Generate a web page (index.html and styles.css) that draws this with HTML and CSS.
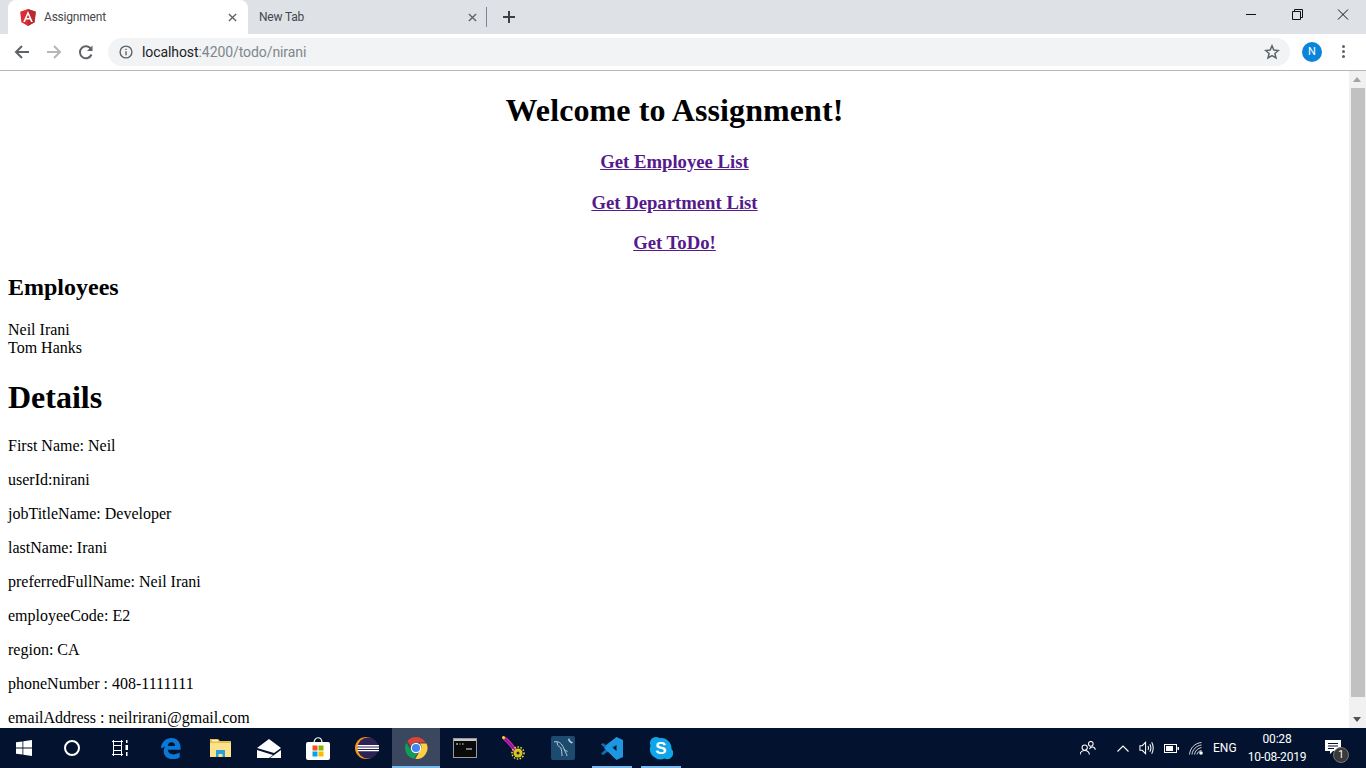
FILE: index.html
```html
<!DOCTYPE html>
<html lang="en">
<head>
<meta charset="utf-8">
<title>Assignment</title>
<link rel="stylesheet" href="styles.css">
</head>
<body>
<div class="tabstrip">
  <div class="tab active">
    <svg class="favicon" viewBox="0 0 16 17"><path fill="#dd2c35" d="M8 0 .2 2.800l1.200 10.400L8 17l6.600-3.800 1.200-10.400z"/><path fill="#b52e31" d="M8 0v17l6.600-3.800 1.200-10.400z"/><path fill="#fff" d="M8 2 3.200 12.900H5l1-2.400h4l1 2.400h1.800zm1.400 7.100H6.600L8 5.700z"/></svg>
    <span class="tab-title">Assignment</span>
    <svg class="tab-x" viewBox="0 0 10 10"><path d="M1 1l8 8M9 1 1 9"/></svg>
  </div>
  <div class="tab inactive">
    <span class="tab-title">New Tab</span>
    <svg class="tab-x" viewBox="0 0 10 10"><path d="M1 1l8 8M9 1 1 9"/></svg>
  </div>
  <span class="tab-sep"></span>
  <svg class="plus" viewBox="0 0 12 12"><path d="M6 0v12M0 6h12"/></svg>
  <div class="win-controls">
    <svg class="win-btn" viewBox="0 0 46 30"><path d="M18 14.500h10"/></svg>
    <svg class="win-btn" viewBox="0 0 46 30"><path d="M18.500 11.500h8v8h-8zM20.500 11.500v-2h8v8h-2"/></svg>
    <svg class="win-btn" viewBox="0 0 46 30"><path d="M18 9.500l10 10M28 9.500l-10 10"/></svg>
  </div>
</div>
<div class="toolbar">
  <svg class="nav" viewBox="0 0 16 16"><path class="nav-dark" d="M15 8H2M8 2 2 8l6 6"/></svg>
  <svg class="nav" viewBox="0 0 16 16"><path class="nav-light" d="M1 8h13M8 2l6 6-6 6"/></svg>
  <svg class="nav" viewBox="0 0 16 16"><path class="nav-dark" d="M13.500 10.500A6 6 0 1 1 13 5"/><path class="nav-fill" d="M14.500 1.500v5.500H9z"/></svg>
  <div class="omnibox">
    <svg class="info" viewBox="0 0 14 14"><circle cx="7" cy="7" r="5.900"/><path d="M7 6.200v4M7 3.800v1.300"/></svg>
    <span class="url"><span class="url-host">localhost</span>:4200/todo/nirani</span>
    <svg class="star" viewBox="0 0 16 16"><path d="M8 1.800l1.800 4.300 4.600.4-3.500 3 1.100 4.500L8 11.600 4 14l1.100-4.500-3.500-3 4.600-.4z"/></svg>
  </div>
  <div class="avatar">N</div>
  <div class="menu"><i></i><i></i><i></i></div>
</div>
<div class="viewport">
  <main class="page">
    <h1 class="center title">Welcome to Assignment!</h1>
    <h3 class="center"><a href="#employees">Get Employee List</a></h3>
    <h3 class="center"><a href="#departments">Get Department List</a></h3>
    <h3 class="center"><a href="#todo">Get ToDo!</a></h3>
    <h2>Employees</h2>
    <div>Neil Irani</div>
    <div>Tom Hanks</div>
    <h1>Details</h1>
    <p>First Name: Neil</p>
    <p>userId:nirani</p>
    <p>jobTitleName: Developer</p>
    <p>lastName: Irani</p>
    <p>preferredFullName: Neil Irani</p>
    <p>employeeCode: E2</p>
    <p>region: CA</p>
    <p>phoneNumber : 408-1111111</p>
    <p>emailAddress : neilrirani@gmail.com</p>
  </main>
  <div class="scrollbar">
    <span class="arrow up"></span>
    <div class="track"><div class="thumb"></div></div>
    <span class="arrow down"></span>
  </div>
</div>
<footer class="taskbar">
  <div class="sys">
    <div class="cell"><svg class="ic16" viewBox="0 0 16 16"><path fill="#fff" d="M0 2.300 6.500 1.400v6.200H0zM7.300 1.300 16 0v7.600H7.300zM0 8.400h6.500v6.200L0 13.700zM7.300 8.400H16V16l-8.700-1.200z"/></svg></div>
    <div class="cell"><svg class="ic16" viewBox="0 0 16 16"><circle cx="8" cy="8" r="7" fill="none" stroke="#fff" stroke-width="2"/></svg></div>
    <div class="cell wide"><svg class="ic16" viewBox="0 0 16 16"><path fill="none" stroke="#fff" d="M0 1.500h11M0 14.500h11M1.500 5.500h8v5h-8zM1.500 0v5.500M9.500 0v5.500M1.500 10.500V16M9.500 10.500V16"/><path fill="#fff" d="M14 0h1.500v3H14zM13.500 5H16v5h-2.500zM14 12h1.500v4H14z"/></svg></div>
  </div>
  <div class="apps">
    <div class="cell"><svg class="ic-edge" viewBox="0 0 24 24"><path fill="#0a78d7" d="M1 12.500C1.500 5 6.500 1 12.500 1c6 0 10 4.500 10 11v2H8.500c.3 3.500 3 5 6 5 2.500 0 5-.8 7-2v5.300c-2.200 1.200-5 1.700-7.500 1.700-6.500 0-10-4-10-8.500 0-2 .7-4 2-5.500C4 11 2.500 12 1 12.500zM8.500 9.800h8c0-2.500-1.500-4-4-4s-3.700 1.700-4 4z"/></svg></div>
    <div class="cell"><svg class="ic-folder" viewBox="0 0 21 18"><path fill="#e9bc4e" d="M0 0h8l2 2h11v16H0z"/><path fill="#fbe28b" d="M0 4h21v14H0z"/><path fill="#fff3c4" d="M2 1h5.500l1 1.500H2z"/><path fill="#2b9fd9" d="M6 18v-7h9v7h-2.500v-3h-4v3z"/></svg></div>
    <div class="cell"><svg class="ic-mail" viewBox="0 0 24 19"><path fill="#fff" d="M0 9 12 0l12 9-7 5zM0 11l16 5-4 3H0zM24 11v8H13z"/></svg></div>
    <div class="cell"><svg class="ic24" viewBox="0 0 24 24"><path fill="none" stroke="#fff" stroke-width="1.200" d="M8 7c0-7 8-7 8 0"/><rect x="0" y="6" width="24" height="18" rx="2" fill="#fff"/><path fill="#f25022" d="M6.500 9.500h5v5h-5z"/><path fill="#7fba00" d="M12.500 9.500h5v5h-5z"/><path fill="#00a4ef" d="M6.500 15.500h5v5h-5z"/><path fill="#ffb900" d="M12.500 15.500h5v5h-5z"/></svg></div>
    <div class="cell"><svg class="ic24" viewBox="0 0 24 24"><circle cx="11" cy="12" r="11" fill="#f7941e"/><circle cx="13" cy="12" r="10.500" fill="#2c2255"/><path fill="none" stroke="#fff" stroke-width="1.400" d="M2.500 9.800H24M2.500 12.200H24M2.500 14.600H24"/></svg></div>
    <div class="cell current"><svg class="ic-chrome" viewBox="0 0 48 48"><path fill="#db4437" d="M24 2a22 22 0 0 1 19 11H24a11 11 0 0 0-10.500 7.500L6.800 10A22 22 0 0 1 24 2z"/><path fill="#0f9d58" d="M5 13l9.500 16.500A11 11 0 0 0 27 34.600l-6.700 11.100A22 22 0 0 1 5 13z"/><path fill="#ffcd40" d="M45 15a22 22 0 0 1-22.500 31L32 29.500A11 11 0 0 0 31.500 15z"/><circle cx="24" cy="24" r="10.500" fill="#fff"/><circle cx="24" cy="24" r="8.200" fill="#4285f4"/></svg></div>
    <div class="cell"><svg class="ic24" viewBox="0 0 24 24"><rect x=".5" y="2.500" width="23" height="19" fill="#0a0a0a" stroke="#9a9a9a"/><path fill="#c8c8c8" d="M1 3h22v2H1z"/><path stroke="#eee" d="M3 8h2M6.500 8h1M9 8h1.500M13 13h6" fill="none"/></svg></div>
    <div class="cell"><svg class="ic24" viewBox="0 0 24 24"><path fill="none" stroke="#f0189a" stroke-width="4" d="M2 2c4 3 8 7 12 14"/><path fill="none" stroke="#3030c0" stroke-width="1.200" d="M3 3c4 3 7 7 11 13"/><circle cx="1.500" cy="1.500" r="1.500" fill="#f5e326"/><circle cx="16" cy="17" r="4.500" fill="#d8c91e"/><circle cx="16" cy="17" r="6" fill="none" stroke="#eee04a" stroke-width="1.500" stroke-dasharray="1.500 1.500"/><circle cx="16" cy="17" r="1.500" fill="#222"/></svg></div>
    <div class="cell"><svg class="ic24" viewBox="0 0 24 24"><rect width="24" height="24" rx="2" fill="#1d4b70"/><path fill="none" stroke="#c6d6e2" stroke-width=".9" d="M3 6c3-1 6 0 8 3 1.500 2 2 5 4 8 .5 1 1 2 1 3M6 6c0 3 2 5 4 6 .5 2 1 5 1 8M13 13c1 1 2 2 3.500 2.500"/><path fill="#c6d6e2" d="M18 2l1.500 3 2.500 1.500-1.500 1-2-1.500-1.500-2z"/></svg></div>
    <div class="cell underlined"><svg class="ic24" viewBox="0 0 24 24"><path fill="#0c6fb8" d="M1 8.500 3 7l6 4.500L16 4v5.500L9.500 14.500 3 19l-2-1.500L6 13z"/><path fill="#1e97e0" d="M16.500 1 23 4v17l-6.500 3L4 12l5-3.500 7.500 6.500V9L9 12z"/><path fill="#1e97e0" d="M16.500 1v5.800L9 12.500 5.500 9.500z"/></svg></div>
    <div class="cell underlined"><svg class="ic24" viewBox="0 0 24 24"><path fill="#10a5e8" d="M7 1a6 6 0 0 1 3.500 1A10.500 10.500 0 0 1 22.500 13a6 6 0 0 1-7 9.500A10.500 10.500 0 0 1 1.500 9.500 6 6 0 0 1 7 1z"/><text class="skype-s" x="12" y="18">S</text></svg></div>
  </div>
  <div class="tray">
    <svg class="people" viewBox="1 1 17 15"><g fill="none" stroke="#fff" stroke-width="1.100"><circle cx="6" cy="7.500" r="2.800"/><path d="M1 15c.3-2.700 2-4.300 5-4.300s4.700 1.600 5 4.300"/><circle cx="12.500" cy="3.500" r="2.500"/><path d="M11 9c.7-1.500 1.700-2.200 3-2.200 1.700 0 3 1 3.300 3"/></g></svg>
    <svg class="chev" viewBox="0 0 12 7"><path d="M.5 6.500 6 1l5.500 5.500"/></svg>
    <svg class="vol" viewBox="0 0 17 14"><g fill="none" stroke="#fff" stroke-width="1.100"><path d="M1 4.500h2.500L7 1v12L3.500 9.500H1z"/><path d="M9.500 5c.7 1.200.7 2.800 0 4M11.500 3c1.400 2.500 1.400 5.500 0 8M13.500 1c2 3.700 2 8.300 0 12"/></g></svg>
    <svg class="batt" viewBox="0 0 15 9"><rect x=".5" y=".5" width="12" height="8" fill="none" stroke="#fff"/><path fill="#fff" d="M2 2h7v5H2zM13.500 3H15v3h-1.500z"/></svg>
    <svg class="wifi" viewBox="0 0 14 14"><g fill="none" stroke="#fff" stroke-opacity=".8"><path d="M.5 13.500C1 7 6 2 12.500 1.500"/><path d="M3 13.500C3.500 8.500 7.500 4.500 12.500 4"/><path d="M5.500 13.500c.4-3.500 3.200-6.300 7-7"/><path d="M8 13.500c.3-2 2-3.700 4.500-4"/></g><circle cx="12" cy="12" r="1.800" fill="#fff"/></svg>
    <span class="lang">ENG</span>
    <div class="clock"><span>00:28</span><span>10-08-2019</span></div>
    <div class="notif">
      <svg class="notif-ic" viewBox="0 0 16 15"><path fill="#fff" d="M0 0h16v11H8l-3 3v-3H0z"/><path stroke="#03132f" d="M3 3.500h10M3 6h10M3 8.500h6"/></svg>
      <span class="badge">1</span>
    </div>
  </div>
</footer>
</body>
</html>
```
FILE: styles.css
```css
* { box-sizing: border-box; }
html, body { height: 100%; }
body {
  margin: 0;
  height: 100vh;
  overflow: hidden;
  display: flex;
  flex-direction: column;
  font-family: "Liberation Serif", serif;
  background: #fff;
}
.tabstrip {
  height: 34px;
  flex: none;
  display: flex;
  align-items: stretch;
  background: #dee1e6;
  padding-left: 8px;
  font-family: Roboto, sans-serif;
  font-size: 12px;
}
.tab {
  width: 240px;
  display: flex;
  align-items: center;
  color: #3c4043;
}
.tab.active {
  background: #fff;
  border-radius: 8px 8px 0 0;
  padding: 0 11px 0 12px;
}
.tab.inactive { padding: 0 9px 0 11px; width: 238px; }
.favicon { width: 16px; height: 17px; margin-right: 8px; flex: none; }
.tab-title { flex: 1; white-space: nowrap; color: #45484c; letter-spacing: -.2px; }
.tab-x { width: 9px; height: 9px; flex: none; fill: none; stroke: #5f6368; stroke-width: 1.500; }
.tab-sep { width: 1px; height: 20px; margin: 7px 0 0 0; background: #80868b; }
.plus { width: 12px; height: 12px; margin: 11px 0 0 16px; fill: none; stroke: #3c4043; stroke-width: 2; }
.win-controls { margin-left: auto; display: flex; }
.win-btn { width: 46px; height: 30px; fill: none; stroke: #111; stroke-width: 1; }
.toolbar {
  height: 37px;
  flex: none;
  display: flex;
  align-items: center;
  background: #fff;
  border-bottom: 1px solid #b6b6b6;
  padding: 0 0 1px 14px;
  font-family: Roboto, sans-serif;
}
.nav { width: 16px; height: 16px; margin-right: 16px; flex: none; fill: none; stroke-width: 2; }
.nav-dark { stroke: #5f6368; }
.nav-light { stroke: #b4b6b9; }
.nav-fill { fill: #5f6368; stroke: none; }
.omnibox {
  width: 1182px;
  height: 28px;
  margin-left: -2px;
  display: flex;
  align-items: center;
  background: #f1f3f4;
  border-radius: 14px;
  padding: 0 10px 0 11px;
}
.info { width: 14px; height: 14px; fill: none; stroke: #5f6368; stroke-width: 1.400; margin-right: 9px; flex: none; }
.url { flex: 1; font-size: 14px; color: #80868b; white-space: nowrap; letter-spacing: -.08px; }
.url-host { color: #202124; }
.star { width: 16px; height: 16px; fill: none; stroke: #5f6368; stroke-width: 1.500; }
.avatar {
  width: 20px; height: 20px;
  margin-left: 12px;
  border-radius: 50%;
  background: #0b85d9;
  color: #fff;
  font-size: 11px;
  line-height: 20px;
  text-align: center;
  flex: none;
}
.menu { margin-left: 20px; display: flex; flex-direction: column; gap: 2px; }
.menu i { display: block; width: 3px; height: 3px; border-radius: 50%; background: #5f6368; }
.viewport { flex: 1; min-height: 0; display: flex; }
.page { flex: 1; min-width: 0; padding: 0 8px; overflow: hidden; color: #000; font-size: 16px; }
.center { text-align: center; }
.title { letter-spacing: .09px; }
h1 { font-size: 32px; margin: 21.440px 0; }
h2 { font-size: 24px; margin: 19.920px 0; }
h3 { font-size: 18.720px; margin: 18.720px 0; }
a { color: #551a8b; }
p { margin: 16px 0; }
.scrollbar { width: 17px; flex: none; display: flex; flex-direction: column; background: #f1f1f1; }
.arrow { height: 17px; flex: none; position: relative; }
.arrow::after {
  content: "";
  position: absolute;
  left: 4px;
  top: 6px;
  border: 4px solid transparent;
  border-top: 0;
  border-bottom: 5px solid #a3a3a3;
}
.arrow.down::after { border-bottom: 0; border-top: 5px solid #505050; }
.track { flex: 1; }
.thumb { height: 609px; width: 14px; margin-left: 2px; background: #c1c1c1; }
.taskbar {
  height: 40px;
  flex: none;
  display: flex;
  align-items: stretch;
  background: #03132f;
  color: #fff;
  font-family: Roboto, sans-serif;
  font-size: 12px;
}
.sys { display: flex; width: 147px; }
.apps { display: flex; gap: 1px; }
.cell { width: 48px; display: flex; align-items: center; justify-content: center; flex: none; padding: 2px 0; position: relative; }
.cell.wide { width: 51px; justify-content: flex-start; padding-left: 16px; }
.cell.current { background: #3b475f; }
.cell.current::after, .cell.underlined::after {
  content: "";
  position: absolute;
  bottom: 0;
  height: 2px;
  background: #76b9ed;
}
.cell.current::after { left: 0; right: 0; }
.cell.underlined::after { left: 4px; right: 4px; }
.ic16 { width: 16px; height: 16px; }
.ic24 { width: 24px; height: 24px; }
.ic-edge { width: 22px; height: 24px; }
.ic-folder { width: 21px; height: 18px; }
.ic-mail { width: 24px; height: 19px; }
.ic-chrome { width: 24px; height: 24px; }
.skype-s { font-family: "Liberation Sans", sans-serif; font-weight: 700; font-size: 17px; fill: #fff; text-anchor: middle; }
.tray { margin-left: auto; display: flex; align-items: center; position: relative; }
.people { width: 16px; height: 15px; margin-right: 21px; }
.chev { width: 12px; height: 7px; fill: none; stroke: #fff; stroke-width: 1.100; margin-right: 10px; }
.vol { width: 16px; height: 14px; margin-right: 9px; }
.batt { width: 15px; height: 9px; margin-right: 10px; }
.wifi { width: 14px; height: 14px; margin-right: 10px; }
.lang { width: 27px; }
.clock { width: 74px; display: flex; flex-direction: column; align-items: center; line-height: 18px; letter-spacing: -.2px; }
.notif { width: 52px; height: 40px; position: relative; }
.notif-ic { position: absolute; left: 11px; top: 12px; width: 16px; height: 15px; }
.badge {
  position: absolute;
  left: 19px; top: 19px;
  width: 16px; height: 16px;
  border-radius: 50%;
  background: #3a3a3a;
  border: 1px solid #777;
  font-size: 10px;
  line-height: 14px;
  text-align: center;
}
```
